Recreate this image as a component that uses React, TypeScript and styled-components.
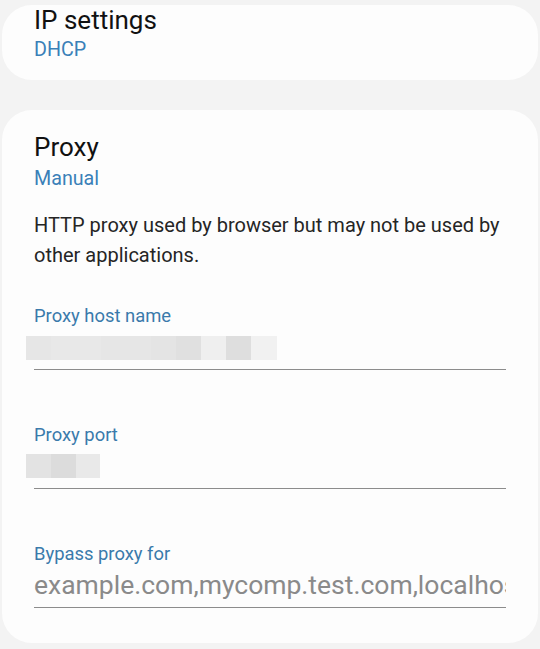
import styled, { createGlobalStyle } from 'styled-components';

const GlobalStyle = createGlobalStyle`
  html, body {
    margin: 0;
    padding: 0;
    background: #f3f3f3;
    font-family: Roboto, 'Noto Sans', sans-serif;
  }
`;

const Page = styled.div`
  display: flex;
  flex-direction: column;
  gap: 30px;
  padding: 5px 2px 6px;
  box-sizing: border-box;
  height: 649px;
  overflow: hidden;
`;

const Card = styled.div<{ $top: number; $bottom: number }>`
  display: flex;
  flex-direction: column;
  background: #fdfdfd;
  border-radius: 30px;
  padding: ${(p) => p.$top}px 32px ${(p) => p.$bottom}px;
`;

const Title = styled.div`
  font-size: 26px;
  line-height: 30px;
  color: #111;
`;

const Value = styled.div<{ $gap: number }>`
  margin-top: ${(p) => p.$gap}px;
  font-size: 19.7px;
  line-height: 24px;
  color: #3a80b8;
`;

const Description = styled.p`
  margin: 19px 0 0;
  font-size: 20px;
  line-height: 30px;
  color: #252525;
`;

const Fields = styled.div`
  display: flex;
  flex-direction: column;
  gap: 54px;
  margin-top: 35px;
`;

const Field = styled.div`
  display: flex;
  flex-direction: column;
`;

const Label = styled.div`
  font-size: 18.4px;
  line-height: 22px;
  color: #3a7aab;
`;

const InputRow = styled.div`
  display: flex;
  align-items: center;
  height: 43px;
  box-sizing: border-box;
  border-bottom: 1.5px solid #8c8c8c;
`;

const Mosaic = styled.div<{ $shift: number }>`
  display: flex;
  height: 24px;
  margin-left: -8px;
  margin-top: ${(p) => p.$shift}px;
`;

const Tile = styled.span<{ $w: number; $c: string }>`
  width: ${(p) => p.$w}px;
  height: 100%;
  background: ${(p) => p.$c};
`;

const Placeholder = styled.span`
  flex: 1;
  min-width: 0;
  overflow: hidden;
  white-space: nowrap;
  font-size: 26.5px;
  line-height: 30px;
  color: #8a8a8a;
  margin-top: -3px;
`;

const hostTiles: [number, string][] = [
  [25, '#e6e6e6'],
  [50, '#e8e8e8'],
  [50, '#e6e6e6'],
  [25, '#e4e4e4'],
  [25, '#e0e0e0'],
  [25, '#efefef'],
  [25, '#dedede'],
  [26, '#f1f1f1'],
];

const portTiles: [number, string][] = [
  [25, '#e3e3e3'],
  [25, '#dcdcdc'],
  [24, '#e9e9e9'],
];

function Blurred({ tiles, shift }: { tiles: [number, string][]; shift: number }) {
  return (
    <Mosaic $shift={shift}>
      {tiles.map(([w, c], i) => (
        <Tile key={i} $w={w} $c={c} />
      ))}
    </Mosaic>
  );
}

export default function App() {
  return (
    <>
      <GlobalStyle />
      <Page>
        <Card $top={0} $bottom={18}>
          <Title>IP settings</Title>
          <Value $gap={3}>DHCP</Value>
        </Card>

        <Card $top={22} $bottom={35}>
          <Title>Proxy</Title>
          <Value $gap={5}>Manual</Value>
          <Description>
            HTTP proxy used by browser but may not be used by other applications.
          </Description>

          <Fields>
            <Field>
              <Label>Proxy host name</Label>
              <InputRow>
                <Blurred tiles={hostTiles} shift={-1} />
              </InputRow>
            </Field>
            <Field>
              <Label>Proxy port</Label>
              <InputRow>
                <Blurred tiles={portTiles} shift={-2} />
              </InputRow>
            </Field>
            <Field>
              <Label>Bypass proxy for</Label>
              <InputRow>
                <Placeholder>example.com,mycomp.test.com,localhost</Placeholder>
              </InputRow>
            </Field>
          </Fields>
        </Card>
      </Page>
    </>
  );
}
